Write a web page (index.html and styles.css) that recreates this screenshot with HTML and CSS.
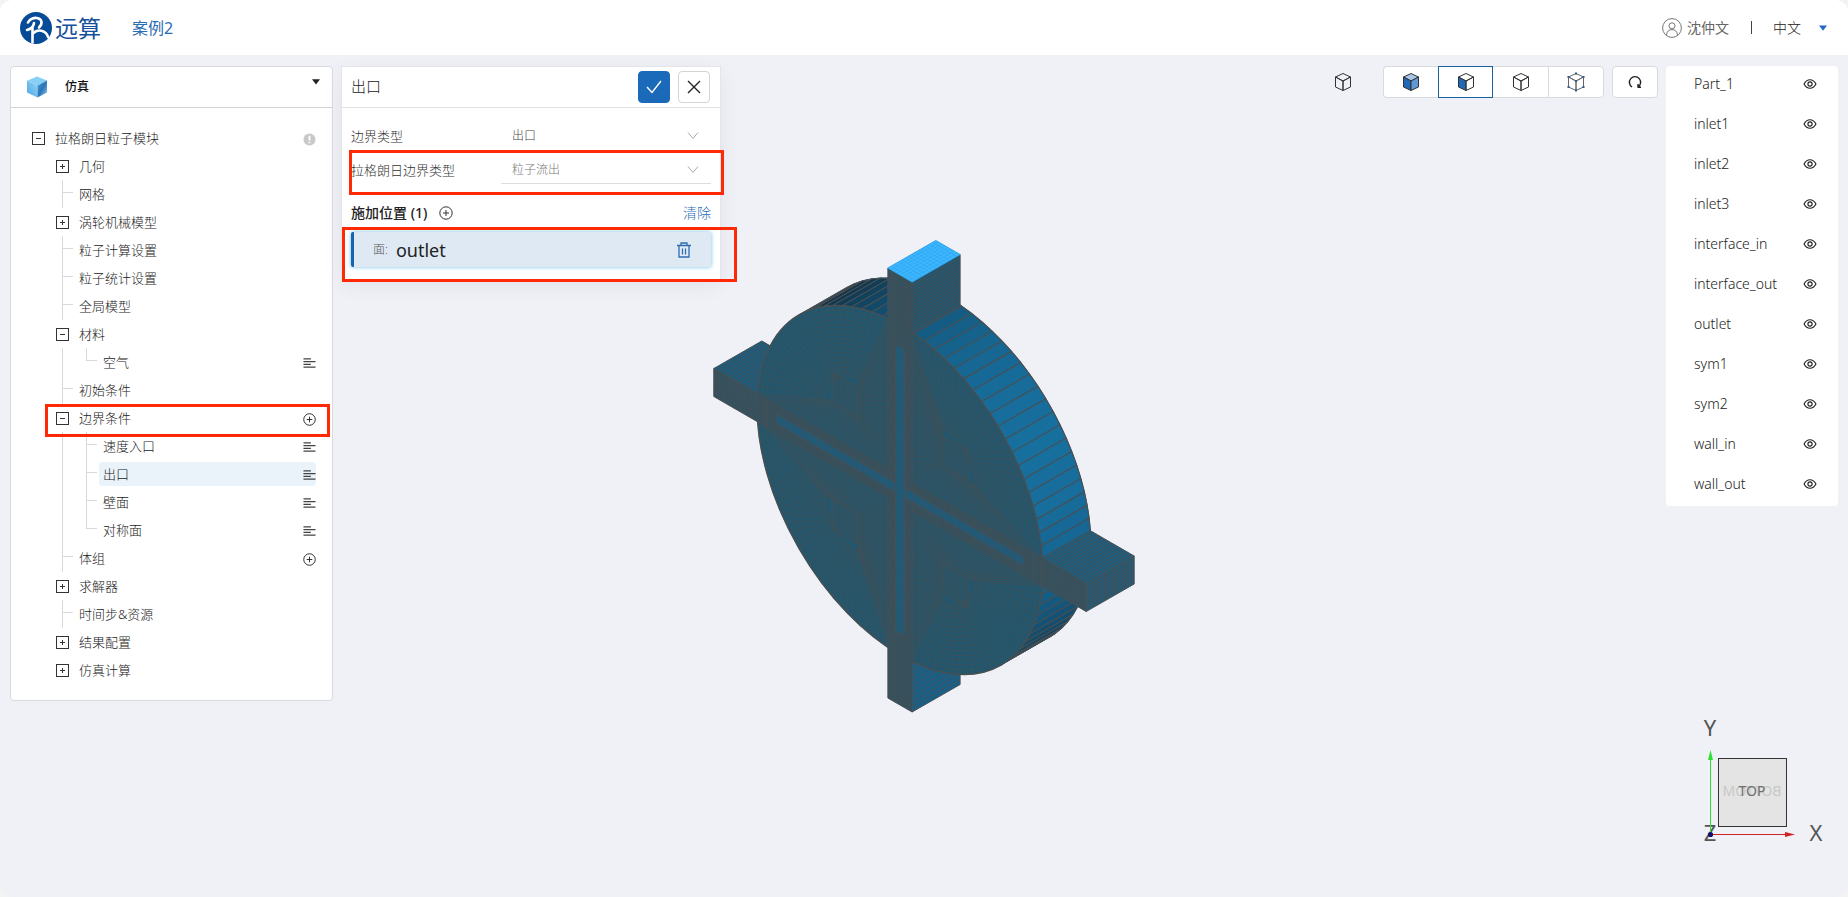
FILE: index.html
```html
<!DOCTYPE html>
<html lang="zh-CN">
<head>
<meta charset="utf-8">
<title>远算 - 案例2</title>
<link rel="stylesheet" href="styles.css">
</head>
<body>
<svg class="defs" aria-hidden="true">
  <symbol id="eye" viewBox="0 0 16 12"><path d="M1.2 6C3 2.6 5.4 1.2 8 1.2S13 2.6 14.800 6C13 9.400 10.600 10.800 8 10.800S3 9.400 1.200 6Z"/><circle cx="8" cy="6" r="2.400"/></symbol>
  <symbol id="plus" viewBox="0 0 14 14"><circle cx="7" cy="7" r="6.200"/><path d="M4 7h6M7 4v6"/></symbol>
  <symbol id="lines" viewBox="0 0 14 12"><path d="M0.500 1.500h8M0.500 4.500h13M0.500 7.500h8M0.500 10.500h13"/></symbol>
  <symbol id="chev" viewBox="0 0 12 10"><path d="M1 1.500l5 6 5-6"/></symbol>
  <symbol id="cube" viewBox="0 0 18 20"><path class="ct" d="M9 1.500l7.500 3.500L9 9 1.500 5z"/><path class="cl" d="M1.500 5L9 9v9.500L1.500 15z"/><path class="cr" d="M16.500 5L9 9v9.500l7.500-3.500z"/></symbol>
  <symbol id="dots" viewBox="0 0 18 20"><path d="M8 .5h2v2H8zM.5 4h2v2h-2zM15.500 4h2v2h-2zM8 8h2v2H8zM.5 14h2v2h-2zM15.500 14h2v2h-2zM8 17.500h2v2H8z"/></symbol>
</svg>

<div class="app">
  <header class="topbar">
    <div class="brand">
      <svg class="logo" viewBox="0 0 32 32" aria-hidden="true">
        <circle cx="16" cy="16" r="16" fill="#064b98"/>
        <g fill="none" stroke="#fff" stroke-width="2.600" stroke-linecap="round" stroke-linejoin="round">
          <path d="M8 10.500C10 6.500 14.500 5.200 18 6.200C22.500 7.500 22.500 12.500 19 15.500"/>
          <path d="M14 11C13.500 15 11 17 7 18"/>
          <path d="M12.500 16V30.500"/>
          <path d="M13 21.500C17.500 16.500 26 18 28 25"/>
        </g>
      </svg>
      <span class="brand-name">远算</span>
    </div>
    <a class="case" href="#">案例2</a>
    <div class="account">
      <svg class="avatar" viewBox="0 0 20 20" aria-hidden="true"><circle cx="10" cy="10" r="9.400"/><circle cx="10" cy="7.800" r="3"/><path d="M4.500 17c.3-3.600 2.500-5.400 5.500-5.400s5.200 1.800 5.500 5.400"/></svg>
      <span class="user">沈仲文</span>
      <span class="sep"></span>
      <button class="lang" type="button">中文<svg class="lang-caret" viewBox="0 0 8 6"><path d="M0 .5h8L4 5.800z" fill="#2468c4"/></svg></button>
    </div>
  </header>

  <main class="work">
    <div class="stage">
      <svg class="model" viewBox="704 231 440 490" role="img" aria-label="模型"><g id="mesh" transform="matrix(.866 .5 0 1 900 490)"></g></svg>
    </div>

    <nav class="tree panel">
      <button class="tree-head" type="button">
        <svg class="sim" viewBox="0 0 20 22" aria-hidden="true">
          <defs><linearGradient id="g1" x1="0" y1="1" x2="1" y2="0"><stop offset="0" stop-color="#4fa6e2"/><stop offset="1" stop-color="#8fd4f8"/></linearGradient><linearGradient id="g2" x1="0" y1="0" x2="1" y2="1"><stop offset="0" stop-color="#4d9ddb"/><stop offset=".5" stop-color="#2a75b8"/><stop offset="1" stop-color="#9ecdf0"/></linearGradient></defs>
          <path d="M10 .5l10 4L10.500 9.500 0 4.800z" fill="#86cff5"/><path d="M0 4.800l10.500 4.700V21.500L0 16.500z" fill="url(#g1)"/><path d="M10.500 9.500L20 4.500v12l-9.500 5z" fill="url(#g2)"/>
        </svg>
        <span>仿真</span>
        <svg class="caret" viewBox="0 0 8 6"><path d="M0 .3h8L4 5.500z"/></svg>
      </button>
      <ul class="rows">
        <li><button class="tg minus" type="button" aria-label="折叠"></button><span class="t">拉格朗日粒子模块</span><svg class="ic warn" viewBox="0 0 14 14"><circle cx="7" cy="7" r="6.500"/><path d="M7 3v5M7 9.500v1.500"/></svg></li>
        <li><i></i><button class="tg" type="button" aria-label="展开"></button><span class="t">几何</span></li>
        <li><i></i><i class="v h"></i><span class="t">网格</span></li>
        <li><i></i><button class="tg" type="button" aria-label="展开"></button><span class="t">涡轮机械模型</span></li>
        <li><i></i><i class="v h"></i><span class="t">粒子计算设置</span></li>
        <li><i></i><i class="v h"></i><span class="t">粒子统计设置</span></li>
        <li><i></i><i class="v h"></i><span class="t">全局模型</span></li>
        <li><i></i><button class="tg minus" type="button" aria-label="折叠"></button><span class="t">材料</span></li>
        <li><i></i><i class="v"></i><i class="v h last"></i><span class="t">空气</span><svg class="ic ln"><use href="#lines"/></svg></li>
        <li><i></i><i class="v h"></i><span class="t">初始条件</span></li>
        <li class="mark-row"><i></i><button class="tg minus" type="button" aria-label="折叠"></button><span class="t">边界条件</span><svg class="ic pl"><use href="#plus"/></svg></li>
        <li><i></i><i class="v"></i><i class="v h"></i><span class="t">速度入口</span><svg class="ic ln"><use href="#lines"/></svg></li>
        <li class="on"><i></i><i class="v"></i><i class="v h"></i><span class="t">出口</span><svg class="ic ln"><use href="#lines"/></svg></li>
        <li><i></i><i class="v"></i><i class="v h"></i><span class="t">壁面</span><svg class="ic ln"><use href="#lines"/></svg></li>
        <li><i></i><i class="v"></i><i class="v h last"></i><span class="t">对称面</span><svg class="ic ln"><use href="#lines"/></svg></li>
        <li><i></i><i class="v h"></i><span class="t">体组</span><svg class="ic pl"><use href="#plus"/></svg></li>
        <li><i></i><button class="tg" type="button" aria-label="展开"></button><span class="t">求解器</span></li>
        <li><i></i><i class="v h"></i><span class="t">时间步&amp;资源</span></li>
        <li><i></i><button class="tg" type="button" aria-label="展开"></button><span class="t">结果配置</span></li>
        <li><i></i><button class="tg" type="button" aria-label="展开"></button><span class="t">仿真计算</span></li>
      </ul>
    </nav>

    <form class="dialog">
      <div class="dialog-head">
        <h2>出口</h2>
        <button class="btn ok" type="button" aria-label="确定"><svg viewBox="0 0 16 14"><path d="M1 7l5 5.500L15 1"/></svg></button>
        <button class="btn" type="button" aria-label="关闭"><svg viewBox="0 0 14 14"><path d="M1 1l12 12M13 1L1 13"/></svg></button>
      </div>
      <div class="dialog-body">
        <div class="field"><label for="bt">边界类型</label><div class="pick"><select id="bt"><option>出口</option></select><svg><use href="#chev"/></svg></div></div>
        <div class="field mark-field"><label for="lt">拉格朗日边界类型</label><div class="pick line"><select id="lt" disabled><option>粒子流出</option></select><svg><use href="#chev"/></svg></div></div>
        <div class="section"><strong>施加位置 (1)</strong><button class="add" type="button" aria-label="添加"><svg><use href="#plus"/></svg></button><button class="clear" type="button">清除</button></div>
        <div class="mark-card"><div class="card"><span class="kind">面:</span><span class="name">outlet</span><button class="del" type="button" aria-label="删除"><svg viewBox="0 0 14 16"><path d="M0 3.500h14M4 3.500V1h6v2.500M2 3.500V15h10V3.500M5.500 6.500v6M8.500 6.500v6"/></svg></button></div></div>
      </div>
    </form>

    <div class="tools">
      <button class="tool bare" type="button" aria-label="视图"><svg class="cube"><use href="#cube"/></svg></button>
      <div class="group">
        <button class="tool" type="button" aria-label="实体"><svg class="cube solid"><use href="#cube"/></svg></button>
        <button class="tool active" type="button" aria-label="面"><svg class="cube face"><use href="#cube"/></svg></button>
        <button class="tool" type="button" aria-label="边"><svg class="cube"><use href="#cube"/></svg></button>
        <button class="tool" type="button" aria-label="点"><svg class="cube pts"><use href="#cube"/><use class="d" href="#dots"/></svg></button>
      </div>
      <button class="tool reset" type="button" aria-label="重置"><svg viewBox="0 0 14 14"><path d="M4 12A5.600 5.600 0 1 1 10 12M10 12.800V9M10 12.200h3"/></svg></button>
    </div>

    <ul class="parts">
      <li>Part_1<button type="button" aria-label="显示"><svg><use href="#eye"/></svg></button></li>
      <li>inlet1<button type="button" aria-label="显示"><svg><use href="#eye"/></svg></button></li>
      <li>inlet2<button type="button" aria-label="显示"><svg><use href="#eye"/></svg></button></li>
      <li>inlet3<button type="button" aria-label="显示"><svg><use href="#eye"/></svg></button></li>
      <li>interface_in<button type="button" aria-label="显示"><svg><use href="#eye"/></svg></button></li>
      <li>interface_out<button type="button" aria-label="显示"><svg><use href="#eye"/></svg></button></li>
      <li>outlet<button type="button" aria-label="显示"><svg><use href="#eye"/></svg></button></li>
      <li>sym1<button type="button" aria-label="显示"><svg><use href="#eye"/></svg></button></li>
      <li>sym2<button type="button" aria-label="显示"><svg><use href="#eye"/></svg></button></li>
      <li>wall_in<button type="button" aria-label="显示"><svg><use href="#eye"/></svg></button></li>
      <li>wall_out<button type="button" aria-label="显示"><svg><use href="#eye"/></svg></button></li>
    </ul>

    <svg class="gizmo" viewBox="0 0 128 136">
      <rect x="18.500" y="46.500" width="68" height="68" fill="#e4e4e4" stroke="#333"/>
      <g font-size="14" text-anchor="middle"><text transform="translate(52 84) scale(-1 1)" fill="#c8c8c8">BOTTOM</text><text x="52" y="84" fill="#6e6e6e">TOP</text></g>
      <g text-anchor="middle" fill="#555" class="axis"><text x="10" y="24">Y</text><text x="10" y="129">Z</text><text x="116" y="129">X</text></g>
      <path d="M10.500 122V46" stroke="#2fe02f"/><path d="M8 48l2.500-10L13 48z" fill="#2fe02f"/>
      <path d="M11 122.500h76" stroke="#d02424"/><path d="M85 120l10 2.500-10 2.500z" fill="#d02424"/>
      <circle cx="10.500" cy="122.500" r="2.600" fill="#10106e"/>
    </svg>
  </main>
</div>
<script src="mesh.js"></script>
</body>
</html>
```
FILE: styles.css
```css
* { box-sizing: border-box; }
body {
  margin: 0;
  background: #f3f3f4;
  color: #222;
  font: 13px/20px "Noto Sans", "Noto Sans CJK SC", sans-serif;
}
button, select { font: inherit; color: inherit; margin: 0; padding: 0; border: 0; background: none; }
ul { list-style: none; margin: 0; padding: 0; }
svg { display: block; fill: none; flex: none; }
.defs { position: absolute; width: 0; height: 0; }
.app { min-height: 100vh; display: flex; flex-direction: column; background: #f0f1f6; border-radius: 12px; overflow: hidden; }

.topbar { height: 55px; display: flex; align-items: center; padding: 0 20px; background: #fff; }
.brand { display: flex; align-items: center; gap: 3px; }
.logo { width: 32px; height: 32px; }
.brand-name { font-size: 23px; line-height: 32px; padding-bottom: 2px; color: #17509a; font-weight: 400; font-family: "Noto Sans CJK SC", sans-serif; }
.case { margin-left: 31px; font-size: 16px; color: #2a6db3; text-decoration: none; }
.account { margin-left: auto; display: flex; align-items: center; font-size: 14px; }
.avatar { width: 20px; height: 20px; stroke: #777; margin-right: 5px; }
.user { color: #666; }
.sep { width: 1px; height: 13px; background: #444; margin: 0 21px 0 22px; }
.lang { display: flex; align-items: center; gap: 18px; font-weight: 300; }
.lang-caret { width: 8px; height: 6px; margin-right: 1px; }

.work { flex: 1; position: relative; display: flex; align-items: flex-start; padding: 11px 10px; }
.stage { position: absolute; inset: 0; display: grid; place-items: center; }
.model { width: 440px; height: 490px; }
.tree, .dialog, .tools, .parts { position: relative; }

.tree { width: 323px; background: #fff; border: 1px solid #d8dadd; border-radius: 4px; }
.tree-head { width: 100%; height: 41px; display: flex; align-items: center; padding: 0 12px 0 16px; border-bottom: 1px solid #d0d2d6; font-size: 12px; font-weight: 500; color: #111; }
.sim { width: 20px; height: 22px; margin-right: 18px; }
.caret { width: 8px; height: 6px; margin: 0 0 10px auto; fill: #222; }
.rows { padding: 16px; }
.rows li { position: relative; display: flex; height: 28px; align-items: center; }
.rows i { position: relative; width: 24px; height: 28px; flex: none; }
.v::before { content: ""; position: absolute; left: 11px; top: 0; bottom: 0; width: 1px; background: #d9d9d9; }
.h::after { content: ""; position: absolute; left: 11px; top: 12px; width: 11px; height: 1px; background: #d9d9d9; }
.last::before { bottom: 15px; }
.tg { position: relative; width: 13px; height: 13px; margin: 0 6px 0 5px; border: 1px solid #333; flex: none; }
.tg::before, .tg:not(.minus)::after { content: ""; position: absolute; left: 3px; top: 5px; width: 5px; height: 1px; background: #333; }
.tg:not(.minus)::after { left: 5px; top: 3px; width: 1px; height: 5px; }
.t { flex: 1; height: 24px; line-height: 24px; padding-left: 4px; border-radius: 4px; font-weight: 300; }
.on .t { background: #eaf3fa; }
.ic { position: absolute; right: 0; top: 9px; width: 13px; height: 13px; }
.ln { height: 12px; stroke: #444; stroke-width: 1.3; }
.pl { stroke: #222; }
.warn circle { fill: #c8c8c8; }
.warn path { stroke: #fff; stroke-width: 2; }
.mark-row::after, .mark-field::after, .mark-card::after { content: ""; position: absolute; border: 3px solid #ff2a05; pointer-events: none; z-index: 1; }
.mark-row::after { inset: 0 -14px -5px 18px; }

.dialog { width: 380px; margin-left: 8px; background: #fff; border: 1px solid #e4e5e8; box-shadow: 0 6px 20px rgba(0, 0, 0, .06); }
.dialog-head { height: 41px; display: flex; align-items: center; gap: 8px; padding: 0 10px 0 9px; border-bottom: 1px solid #e0e1e4; }
.dialog h2 { flex: 1; margin: 0; padding-bottom: 2px; font-size: 15px; font-weight: 300; }
.btn { width: 32px; height: 32px; display: grid; place-items: center; border: 1px solid #d4d4d4; border-radius: 4px; background: #fff; }
.btn svg { width: 14px; height: 14px; stroke: #222; stroke-width: 1.4; }
.btn.ok { background: #1b69b9; border-color: #1b69b9; }
.btn.ok svg { width: 16px; stroke: #fff; }
.dialog-body { padding: 11px 9px 12px; }
.field { position: relative; display: flex; height: 34px; align-items: center; }
.field label { width: 150px; flex: none; font-weight: 300; color: #333; }
.pick { position: relative; flex: 1; }
.pick select { appearance: none; width: 100%; height: 28px; padding-left: 11px; font-size: 12px; font-weight: 300; color: #444; opacity: 1; }
.line select { border-bottom: 1px solid #ddd; color: #777; }
.pick svg { position: absolute; right: 12px; top: 9px; width: 12px; height: 10px; stroke: #aaa; pointer-events: none; }
.mark-field::after { inset: -3px -13px -8px -2px; }
.section { display: flex; align-items: center; height: 32px; margin: 10px 0 3px; font-size: 14px; }
.section strong { font-weight: 500; color: #222; }
.add { margin-left: 12px; }
.add svg { width: 14px; height: 14px; stroke: #333; }
.clear { margin-left: auto; color: #2a6db3; font-weight: 300; }
.mark-card { position: relative; }
.mark-card::after { inset: -5px -26px -15px -9px; }
.card { display: flex; align-items: center; height: 35px; padding: 0 20px 0 19px; background: #dfe9f4; border-left: 3px solid #1b63ad; border-radius: 2px; box-shadow: 0 0 4px #6fc0e6; }
.kind { font-size: 12px; font-weight: 300; color: #555; }
.name { margin-left: 8px; font-size: 18px; color: #222; }
.del { margin-left: auto; }
.del svg { width: 14px; height: 16px; stroke: #2f6db0; stroke-width: 1.3; }

.tools { margin-left: auto; display: flex; gap: 8px; }
.group { display: flex; }
.tool { width: 55px; height: 32px; display: grid; place-items: center; background: #fff; border: 1px solid #d8dadd; border-right-width: 0; }
.group .tool:first-child { border-radius: 4px 0 0 4px; }
.group .tool:last-child { border-radius: 0 4px 4px 0; border-right-width: 1px; width: 56px; }
.tool.active { border: 1px solid #1b609f; }
.group .active + .tool { border-left-width: 0; }
.tool.bare { background: none; border: 0; width: 18px; margin-right: 23px; }
.tool.reset { width: 46px; border-width: 1px; border-radius: 4px; margin-right: 8px; }
.reset svg { width: 14px; height: 14px; stroke: #222; stroke-width: 1.4; }
.cube { width: 18px; height: 20px; stroke: #333; --top: none; --left: none; --right: none; }
.ct { fill: var(--top); }
.cl { fill: var(--left); }
.cr { fill: var(--right); }
.solid { --top: #a9c6e4; --left: #1f69b8; --right: #5f98d2; }
.face { --left: #1f69b8; }
.pts { stroke: #666; }
.pts .d { fill: #2a5f98; stroke: none; }

.parts { width: 172px; background: #fff; border-radius: 4px; }
.parts li { display: flex; height: 40px; align-items: center; justify-content: space-between; padding: 0 21px 4px 28px; font-size: 14px; font-weight: 300; }
.parts svg { width: 14px; height: 12px; stroke: #222; stroke-width: 1.3; }

.gizmo { position: absolute; right: 20px; bottom: 49px; width: 128px; height: 136px; font-family: "Noto Sans", sans-serif; }
.axis { font-size: 22px; font-weight: 400; }
```
FILE: mesh.js
```js
// Lagrangian rotor mesh, drawn in the plane of its front face; D is the depth direction.
const R = 165, W = 14, L = 215, D = [55.4, -55.2];
const root = document.getElementById('mesh');
const add = (d, fill, stroke, width, opacity) => {
  const p = document.createElementNS('http://www.w3.org/2000/svg', 'path');
  p.setAttribute('d', d);
  p.setAttribute('fill', fill || 'none');
  if (stroke) {
    p.setAttribute('stroke', stroke);
    p.setAttribute('stroke-width', width || 1);
    p.setAttribute('stroke-opacity', opacity || 1);
    p.setAttribute('vector-effect', 'non-scaling-stroke');
  }
  root.appendChild(p);
};
const EDGE = '#4a4f52';
const seg = (a, b) => `M${a[0].toFixed(2)} ${a[1].toFixed(2)}L${b[0].toFixed(2)} ${b[1].toFixed(2)}`;
const at = (o, a, s, b, t) => [o[0] + a[0] * s + b[0] * t, o[1] + a[1] * s + b[1] * t];
// Parallelogram with n lines across a and m lines across b.
const face = (o, a, b, n, m, fill, line, opacity) => {
  const c = [at(o, a, 0, b, 0), at(o, a, 1, b, 0), at(o, a, 1, b, 1), at(o, a, 0, b, 1)];
  const outline = 'M' + c.map(p => p.join(' ')).join('L') + 'Z';
  add(outline, fill);
  let d = '';
  for (let i = 1; i < n; i++) d += seg(at(o, a, i / n, b, 0), at(o, a, i / n, b, 1));
  for (let i = 1; i < m; i++) d += seg(at(o, a, 0, b, i / m), at(o, a, 1, b, i / m));
  add(d, null, line || EDGE, 1, opacity || 0.8);
  add(outline, null, line || EDGE, 1);
};

face([-L, -W], [75, 0], D, 18, 0, '#1f5b7a');

// Cylinder side
const step = 4.2;
let sideLines = '';
for (let a = -135; a < 45; a += step) {
  const e = Math.min(a + step, 45), p = [a, e].map(x => [R * Math.cos(x * Math.PI / 180), R * Math.sin(x * Math.PI / 180)]);
  const k = Math.max(0, Math.cos((a + 38) * Math.PI / 180));
  const mix = [[14, 23], [50, 111], [72, 158]].map(c => Math.round(c[0] + (c[1] - c[0]) * k));
  const q = p.map(x => [x[0] + D[0], x[1] + D[1]]);
  const c = `rgb(${mix})`;
  add(`M${p[0]}L${q[0]}L${q[1]}L${p[1]}Z`, c, c, 1);
  sideLines += seg(p[0], q[0]) + seg(q[0], q[1]);
}
add(sideLines, null, EDGE, 1.2);

face([W, 130], [0, L - 130], D, 16, 0, '#1a5f85');

// Front disc: each quadrant blends from its rim to a regular core round c
add(`M${-R} 0A${R} ${R} 0 1 1 ${R} 0A${R} ${R} 0 1 1 ${-R} 0Z`, '#20576f', EDGE, 1.4);
for (const sx of [-1, 1]) for (const sy of [-1, 1]) {
  const c = [60 * sx, 60 * sy], rim = [];
  for (let i = 0; i <= 28; i++) {
    const a = (5 + i * 80 / 28) * Math.PI / 180;
    rim.push([R * Math.cos(a) * sx, R * Math.sin(a) * sy]);
  }
  for (let i = 1; i <= 22; i++) rim.push([W * sx, (164 - (164 - W) * i / 22) * sy]);
  for (let i = 1; i < 22; i++) rim.push([(W + (164 - W) * i / 22) * sx, W * sy]);
  const toward = (p, t) => [c[0] + (p[0] - c[0]) * t, c[1] + (p[1] - c[1]) * t];
  add(rim.map(p => seg(p, toward(p, 0.25))).join(''), null, EDGE, 1, 0.5);
  let rings = '';
  for (let r = 5; r <= 20; r++) rings += 'M' + rim.map(p => toward(p, r / 20).map(v => v.toFixed(2))).join('L') + 'Z';
  add(rings, null, EDGE, 1, 0.6);
  const lo = toward([W * sx, W * sy], 0.25), side = 30;
  face(lo, [side * sx, 0], [0, side * sy], 9, 9, 'none', EDGE, 0.6);
}
face([-R, -W], [2 * R, 0], [0, 2 * W], 110, 10, '#2b5365', EDGE, 0.75);
face([-W, -L], [2 * W, 0], [0, 2 * L], 10, 140, '#2b5365', EDGE, 0.75);
face([-143, -5], [286, 0], [0, 10], 80, 0, '#1c5c7d', EDGE, 0.6);
face([-5, -143], [10, 0], [0, 286], 0, 80, '#1c5c7d', EDGE, 0.6);
face([-L, -W], [60, 0], [0, 2 * W], 18, 9, '#2b5365');

// Top duct
face([W, -L], [0, L - R + 1], D, 16, 0, '#22566f', EDGE, 0.9);
face([-W, -L], [2 * W, 0], D, 8, 14, '#3db7ff', '#2fa4ee', 0.6);
// Right duct
face([R - 1, -W], [L - R + 1, 0], D, 14, 0, '#1d5d7d', EDGE, 0.9);
face([R - 1, -W], [L - R + 1, 0], [0, 2 * W], 14, 9, '#2b5365');
face([L, -W], [0, 2 * W], D, 10, 5, '#235a76');
```
